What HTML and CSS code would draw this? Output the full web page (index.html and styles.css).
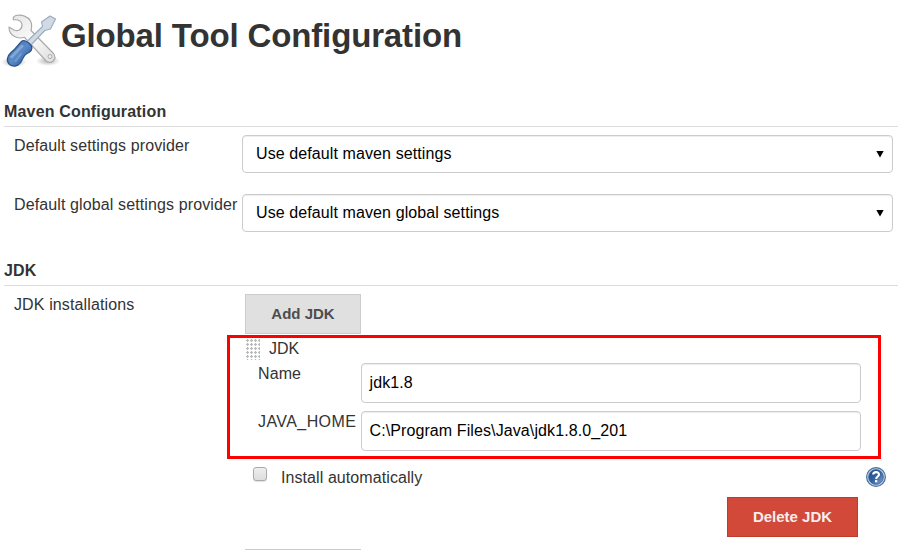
FILE: index.html
```
<!DOCTYPE html>
<html lang="en">
<head>
<meta charset="utf-8">
<title>Global Tool Configuration</title>
<link rel="stylesheet" href="styles.css">
</head>
<body>
<main class="page">
  <header class="page-header">
    <svg class="tools" viewBox="0 0 60 60" width="60" height="60" aria-hidden="true">
      <defs>
        <linearGradient id="steel" x1="0" y1="0" x2="1" y2="1"><stop offset="0" stop-color="#e4e4e4"/><stop offset=".5" stop-color="#fafafa"/><stop offset="1" stop-color="#dcdddc"/></linearGradient>
        <linearGradient id="grip" x1="0" y1="0" x2="1" y2="1"><stop offset="0" stop-color="#3465a4"/><stop offset=".5" stop-color="#5b8ac8"/><stop offset="1" stop-color="#204a87"/></linearGradient>
        <radialGradient id="shade"><stop offset="0" stop-color="#000" stop-opacity=".3"/><stop offset="1" stop-color="#000" stop-opacity="0"/></radialGradient>
      </defs>
      <ellipse cx="13" cy="52" rx="13" ry="5" fill="url(#shade)"/>
      <ellipse cx="47" cy="51" rx="12" ry="5" fill="url(#shade)"/>
      <path d="M15 5.500C21 4.200 27 6.500 29.500 11C31 14 30.800 17.500 30 20.500L52.500 43.500C56.500 49 50.500 55 45.200 51L23.500 27.300C16.500 29.500 8 26 8 17L13 20C17 22 21.500 19 21 14.500C20.500 11 17 9.500 12.500 9.800C11.500 8 13 6 15 5.500Z" fill="url(#steel)" stroke="#aaaba9" stroke-width="1.200" stroke-linejoin="round"/>
      <circle cx="49" cy="46.500" r="2" fill="#eee" stroke="#aaa"/>
      <path d="M25.500 32L41.500 16.500L40.500 12L49 6L54.500 9L49.500 19L43.800 20.500L29.500 35.500Z" fill="#d0dae5" stroke="#9babbd" stroke-width="1.100" stroke-linejoin="round"/>
      <path d="M21 31C23 29.500 26 31.500 28.500 33.500C32 36.500 31.500 40.500 28 42.500C24 44 23 46 21 50C18 57 12 57 8.500 54.500C5 51 6 46 10 42.500C16 38 17 34 21 31Z" fill="url(#grip)" stroke="#285388" stroke-width="1.200"/>
      <path d="M10.500 47L21 36" stroke="#a7c5e8" stroke-width="3" stroke-linecap="round" opacity=".55"/>
      <path d="M14.500 51L20 44" stroke="#a7c5e8" stroke-width="2" stroke-linecap="round" opacity=".35"/>
    </svg>
    <h1>Global Tool Configuration</h1>
  </header>

  <section class="maven">
    <h2>Maven Configuration</h2>
    <div class="setting">
      <span class="label">Default settings provider</span>
      <div class="select"><span>Use default maven settings</span><i class="arrow"></i></div>
    </div>
    <div class="setting">
      <span class="label">Default global settings provider</span>
      <div class="select"><span>Use default maven global settings</span><i class="arrow"></i></div>
    </div>
  </section>

  <section class="jdk">
    <h2>JDK</h2>
    <div class="installations">
      <span class="label">JDK installations</span>
      <div class="content">
        <button class="btn add">Add JDK</button>
        <div class="entry">
          <div class="entry-title"><i class="handle"></i><span>JDK</span></div>
          <div class="field"><span>Name</span><div class="input">jdk1.8</div></div>
          <div class="field"><span class="home">JAVA_HOME</span><div class="input">C:\Program Files\Java\jdk1.8.0_201</div></div>
          <div class="highlight"></div>
        </div>
        <div class="auto">
          <i class="checkbox"></i><span class="auto-label">Install automatically</span>
          <svg class="help" width="20" height="20" viewBox="0 0 20 20" aria-label="Help">
            <defs><linearGradient id="helpfill" x1="0" y1="0" x2="1" y2="1"><stop offset="0" stop-color="#204a87"/><stop offset=".5" stop-color="#34629f"/><stop offset="1" stop-color="#86a8d2"/></linearGradient></defs>
            <circle cx="10" cy="10" r="9.400" fill="#c2d2e5" stroke="#48719f" stroke-width="1.200"/>
            <circle cx="10" cy="10" r="7.400" fill="url(#helpfill)" stroke="#365f98" stroke-width=".7"/>
            <path d="M7.200 7.600C7.200 4.300 13 4.300 13 7.400C13 9.600 10.200 9.500 10.200 12" fill="none" stroke="#fff" stroke-width="2.100"/>
            <rect x="9" y="13.100" width="2.300" height="2.200" fill="#fff"/>
          </svg>
        </div>
        <button class="btn delete">Delete JDK</button>
        <div class="next-button"></div>
      </div>
    </div>
  </section>
</main>
</body>
</html>
```
FILE: styles.css
```
* { box-sizing: border-box; }
body {
  margin: 0;
  background: #fff;
  color: #333;
  font: 16px/20px "Liberation Sans", Helvetica, Arial, sans-serif;
}
.page { width: 914px; height: 550px; overflow: hidden; padding-left: 4px; }
.page-header { display: flex; height: 101px; padding-top: 10px; margin-left: -3px; }
.tools { flex: none; }
h1 { margin: 6px 0 0; font-size: 33px; line-height: 40px; letter-spacing: -.14px; white-space: nowrap; }
h2 { width: 894px; height: 26px; margin: 0; padding-top: 1px; border-bottom: 1px solid #ddd; font-size: 16px; line-height: 20px; letter-spacing: .17px; }
.maven { height: 159px; }
.setting { display: flex; height: 59px; padding-top: 8px; }
.label { flex: none; width: 228px; margin-left: 10px; padding-top: 1px; letter-spacing: .12px; white-space: nowrap; }
.select {
  display: flex; align-items: center; justify-content: space-between;
  width: 651px; height: 38px; padding: 0 8px 0 13px;
  border: 1px solid #ccc; border-radius: 4px; color: #000; letter-spacing: .1px;
  box-shadow: inset 0 1px 1px rgba(0, 0, 0, .075);
}
.arrow { width: 8px; height: 7px; background: #000; clip-path: polygon(0 0, 100% 0, 50% 100%); }
.installations { display: flex; padding-top: 8px; }
.content { width: 651px; padding-left: 3px; }
.btn { display: block; height: 40px; padding: 0; font: bold 15px/20px "Liberation Sans", sans-serif; }
.add { width: 116px; border: 1px solid #ccc; background: #e0e0e0; color: #4d4d4d; }
.entry { position: relative; height: 124px; padding-top: 5px; }
.entry-title { display: flex; height: 24px; gap: 9px; }
.handle {
  width: 14px; height: 21px; margin-left: 1px;
  background: radial-gradient(circle at 1.500px 1.500px, #bbb 1px, transparent 1.500px) 0 0 / 4px 4px;
}
.field { display: flex; height: 48px; padding-left: 13px; }
.field > span { flex: none; width: 103px; padding-top: 1px; letter-spacing: .1px; }
.field > .home { letter-spacing: .42px; }
.input {
  width: 500px; height: 40px; padding: 9px 7.500px;
  border: 1px solid #ccc; border-radius: 4px; color: #000; letter-spacing: .1px;
  box-shadow: inset 0 1px 1px rgba(0, 0, 0, .075);
}
.highlight { position: absolute; left: -18px; top: 1px; width: 654px; height: 124px; border: 3px solid #f00; }
.auto { display: flex; height: 39px; padding: 9px 7px 0 8px; }
.checkbox { width: 14px; height: 14px; border: 1px solid #aaa; border-radius: 3px; background: linear-gradient(#eee, #ddd); box-shadow: 0 1px 1px rgba(0, 0, 0, .12); }
.auto-label { margin: 1px 0 0 14px; letter-spacing: .08px; }
.help { margin-left: auto; }
.delete { width: 131px; margin-left: 482px; border: 1px solid #bf3b2c; background: #d24939; color: #f5eeee; }
.next-button { width: 116px; height: 40px; margin-top: 12px; border: 1px solid #ccc; background: #e0e0e0; }
```
